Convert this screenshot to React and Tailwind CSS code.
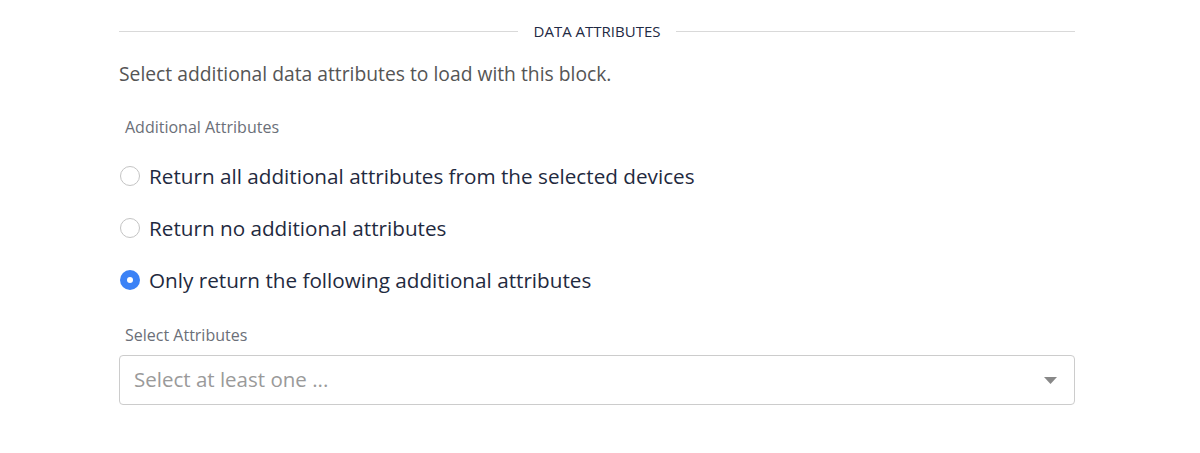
import { useState } from 'react'

const options = [
  'Return all additional attributes from the selected devices',
  'Return no additional attributes',
  'Only return the following additional attributes',
]

function Radio({ checked, label, onClick }) {
  return (
    <label onClick={onClick} className="flex items-center h-[52px] cursor-pointer">
      {checked ? (
        <span className="ml-[1px] w-[20px] h-[20px] rounded-full bg-[#3b82f6] flex items-center justify-center shrink-0">
          <span className="w-[6px] h-[6px] rounded-full bg-white" />
        </span>
      ) : (
        <span className="ml-[1px] w-[20px] h-[20px] rounded-full border border-[#c4c4c4] bg-white shrink-0" />
      )}
      <span className="ml-[9px] text-[20.7px] leading-[28px] text-[#1f2a40]">{label}</span>
    </label>
  )
}

export default function App() {
  const [selected, setSelected] = useState(2)

  return (
    <div className="w-[1200px] h-[453px] bg-white font-['Open_Sans',sans-serif]">
      <div className="ml-[119px] w-[956px] pt-[20px]">
        <div className="flex items-center gap-[16px] h-[22px]">
          <div className="flex-1 h-px bg-[#d9d9d9]" />
          <span className="text-[15px] leading-[22px] text-[#1f2a44] uppercase">Data Attributes</span>
          <div className="flex-1 h-px bg-[#d9d9d9]" />
        </div>

        <p className="mt-[20px] text-[19.3px] leading-[24px] text-[#555555]">
          Select additional data attributes to load with this block.
        </p>

        <div className="mt-[31px] ml-[6px] text-[16px] leading-[20px] text-[#6b6f78]">Additional Attributes</div>

        <div className="mt-[13px]">
          {options.map((o, i) => (
            <Radio key={o} label={o} checked={selected === i} onClick={() => setSelected(i)} />
          ))}
        </div>

        <div className="mt-[19px] ml-[6px] text-[16px] leading-[20px] text-[#6b6f78]">Select Attributes</div>

        <div className="mt-[10px] h-[50px] border border-[#cccccc] rounded-[4px] flex items-center justify-between pl-[14px] pr-[17px]">
          <span className="pb-[3px] text-[20.5px] leading-[28px] text-[#9a9a9a]">Select at least one ...</span>
          <svg width="13" height="7" viewBox="0 0 13 7">
            <path d="M0 0 L13 0 L6.5 7 Z" fill="#888888" />
          </svg>
        </div>
      </div>
    </div>
  )
}
